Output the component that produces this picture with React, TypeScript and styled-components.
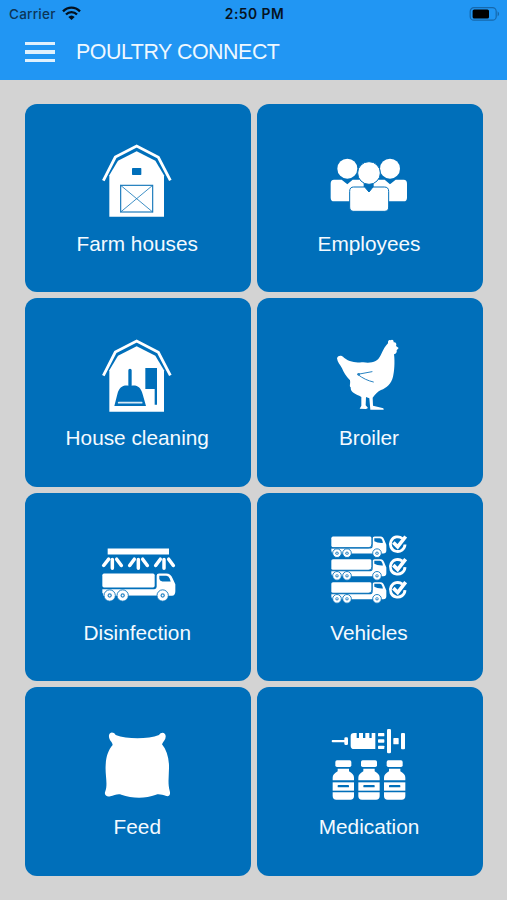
import React from "react";
import styled, { createGlobalStyle } from "styled-components";

const GlobalStyle = createGlobalStyle`
  * { box-sizing: border-box; }
  body { margin: 0; background: #d3d3d3; font-family: "Liberation Sans", Arial, sans-serif; }
`;

const BLUE = "#006fba";

const Screen = styled.div`
  width: 507px;
  height: 900px;
  overflow: hidden;
  background: #d3d3d3;
`;

const Header = styled.header`
  height: 79.5px;
  background: #2196f3;
`;

const StatusBar = styled.div`
  display: grid;
  grid-template-columns: 1fr auto 1fr;
  align-items: center;
  height: 27px;
  padding: 0 7px 0 9px;
  color: #06131f;
  font-family: Inter, sans-serif;
  font-size: 13.5px;
`;

const Carrier = styled.div`
  display: flex;
  align-items: center;
  gap: 6px;
  color: #0c3557;
  font-weight: 500;
  letter-spacing: 0.25px;
`;

const Clock = styled.div`
  font-weight: 600;
  font-size: 13.8px;
  letter-spacing: 0.5px;
`;

const BatterySlot = styled.div`
  display: flex;
  justify-content: flex-end;
`;

const TitleBar = styled.div`
  display: flex;
  align-items: center;
  height: 50px;
  padding-left: 25px;
  gap: 21px;
`;

const MenuButton = styled.button`
  display: flex;
  flex-direction: column;
  gap: 5px;
  width: 30px;
  padding: 0;
  border: 0;
  background: none;
`;

const MenuLine = styled.span`
  height: 3.4px;
  background: #e0f1fd;
`;

const Title = styled.h1`
  margin: 0;
  padding-top: 1px;
  color: #eef8ff;
  font-size: 21.4px;
  font-weight: 400;
  letter-spacing: -0.46px;
  white-space: nowrap;
`;

const Grid = styled.main`
  display: grid;
  grid-template-columns: 226px 225.5px;
  grid-auto-rows: 188.5px;
  gap: 6px;
  padding: 24px 0 0 25px;
`;

const Tile = styled.div`
  display: flex;
  flex-direction: column;
  align-items: center;
  padding-top: 27px;
  border-radius: 12px;
  background: ${BLUE};
`;

const TileIcon = styled.svg`
  display: block;
  flex: none;
  width: 100px;
  height: 100px;
`;

const Label = styled.span`
  margin-top: 1px;
  padding-right: 1.5px;
  color: #f4faff;
  font-size: 20.8px;
  line-height: 24px;
  white-space: nowrap;
`;

const Wifi = () => (
  <svg width="19" height="15" viewBox="0 0 57 45" fill="none" stroke="#04111d" strokeWidth="7">
    <path d="M3 16C18 1 39 1 54 16" />
    <path d="M12 25.500C21 16 36 16 45 25.500" />
    <path d="M19 33C25 27 32 27 38 33L28.500 42Z" fill="#04111d" stroke="none" />
  </svg>
);

const Battery = () => (
  <svg width="32" height="16" viewBox="0 0 32 16">
    <rect x="2.200" y="1.600" width="26" height="12.600" rx="3.800" fill="none" stroke="#1668ac" strokeWidth="1.200" />
    <rect x="4.600" y="3.500" width="16.400" height="9" rx="1.600" fill="#000" />
    <path d="M29.600 5.200q3 2.700 0 5.400z" fill="#1668ac" />
  </svg>
);

const BarnShell = () => (
  <>
    <path d="M40 151L76 80L140 47L205 81L241 150" fill="none" stroke="#fff" strokeWidth="8.500" />
    <path d="M58 259V135L84 91L140 63L196 91L222 135V259Z" fill="#fff" />
  </>
);

const FarmHouse = () => (
  <>
    <BarnShell />
    <rect x="126" y="113" width="28" height="21" rx="2" fill={BLUE} />
    <g fill="none" stroke="#1879bb" strokeWidth="3.500">
      <rect x="92" y="165" width="96" height="80" />
      <path d="M92 165L188 245M188 165L92 245" strokeWidth="2.500" />
    </g>
  </>
);

const Employees = () => (
  <g fill="#fff">
    <circle cx="82" cy="115" r="30" />
    <circle cx="210" cy="115" r="30" />
    <path d="M42 148H65L82 162L98 148H121Q131 148 131 160V213H42Q32 213 32 202V160Q32 148 42 148Z" />
    <path d="M171 148H194L210 162L227 148H251Q261 148 261 160V202Q261 213 251 213H161V160Q161 148 171 148Z" />
    <path d="M101 170H134L147 185L159 170H193Q206 170 206 183V230Q206 243 193 243H101Q89 243 89 230V183Q89 170 101 170Z" stroke={BLUE} strokeWidth="3" />
    <circle cx="147" cy="128" r="34" stroke={BLUE} strokeWidth="3" />
  </g>
);

const HouseCleaning = () => (
  <>
    <BarnShell />
    <g fill={BLUE}>
      <path d="M115 181V135Q115 130 120 130Q125 130 125 135V181C143 179 152 186 158 207L168 242H73L82 207C88 186 97 179 115 181Z" />
      <path d="M166 128H201V238H194V191H166Z" />
    </g>
    <path d="M86 232H155" stroke="#d7e9f5" strokeWidth="5" strokeLinecap="round" />
  </>
);

const Broiler = () => (
  <>
    <path
      d="M51 100C55 90 65 91 72 98C90 112 110 113 130 112C155 115 173 111 182 91C190 73 197 62 204 55C203 47 207 43 212 46C217 41 222 47 221 52C228 51 231 58 228 63L236 69L230 76C232 83 225 89 222 87C225 111 223 139 219 155C214 176 200 188 183 195C174 199 164 209 158 218L159 242L184 248Q192 248 191 254H151L148 220L138 216L137 241L144 249L138 252L119 251L124 242V216C108 207 91 204 92 187C87 183 92 178 90 166C78 154 71 142 66 130C61 120 52 111 51 100Z"
      fill="#fff"
    />
    <path d="M156 140L113 148C128 160 143 167 160 171" fill="none" stroke="#2883c2" strokeWidth="3" strokeLinecap="round" strokeLinejoin="round" />
    <circle cx="116" cy="148" r="4" fill="#2883c2" />
  </>
);

const Wheel = ({ cx, cy, r }: { cx: number; cy: number; r: number }) => (
  <>
    <circle cx={cx} cy={cy} r={r} fill="#fff" stroke={BLUE} strokeWidth="2.600" />
    <circle cx={cx} cy={cy} r={r * 0.38} fill="#2c86c4" />
    <circle cx={cx} cy={cy} r={r * 0.17} fill="#fff" />
  </>
);

const Disinfection = () => (
  <>
    <rect x="53" y="54" width="184" height="18" fill="#fff" />
    <path
      d="M56 86L41 105M67 87V113M80 86L94 105M133 86L119 105M145 87V113M158 86L172 105M211 86L197 105M222 87V113M236 86L250 105"
      fill="none"
      stroke="#fff"
      strokeWidth="10.500"
      strokeLinecap="round"
    />
    <rect x="37" y="129" width="157" height="42" rx="5" fill="#fff" />
    <path d="M37 176H193Q200 176 200 169V135Q200 129 207 129H229Q242 129 248 144L256 161V182Q256 194 246 196H37Z" fill="#fff" />
    <path d="M208 136H229Q236 136 239 144L242 153H217Q208 151 208 145Z" fill={BLUE} />
    <path d="M37 188V200M114 198H200" stroke={BLUE} strokeWidth="5" />
    <Wheel cx={59} cy={195} r={17} />
    <Wheel cx={98} cy={195} r={17} />
    <Wheel cx={218} cy={195} r={17} />
  </>
);

const VehicleRow = ({ y }: { y: number }) => (
  <g transform={`translate(0 ${y})`}>
    <rect x="34" y="48" width="121" height="32" rx="5" fill="#fff" />
    <path d="M34 84H151Q158 84 158 76V53Q158 48 164 48H182Q190 48 194 61L199 73V90Q199 99 190 99H40Q34 98 34 91Z" fill="#fff" />
    <path d="M34 82H145Q156 82 156 70V48" fill="none" stroke="#1578bb" strokeWidth="3" />
    <path d="M163 53H179Q185 53 187 60L189 67Q172 68 163 62Z" fill={BLUE} />
    <Wheel cx={51} cy={98} r={13} />
    <Wheel cx={81} cy={98} r={13} />
    <Wheel cx={171} cy={98} r={13} />
    <path d="M247 54A22 22 0 1 0 255 72" fill="none" stroke="#fff" strokeWidth="8.500" />
    <path d="M220 66L233 79L257 48" fill="none" stroke="#fff" strokeWidth="11" />
  </g>
);

const Vehicles = () => (
  <>
    <VehicleRow y={0} />
    <VehicleRow y={68} />
    <VehicleRow y={137} />
  </>
);

const Feed = () => (
  <path
    d="M57 61C59 51 70 49 77 60C111 73 174 73 207 60C214 48 227 53 227 63C228 74 220 79 216 88C229 104 236 125 237 151C238 176 232 201 239 227C243 240 236 245 229 243C217 240 208 236 198 239C164 252 126 250 94 239C84 235 72 241 61 244C50 247 41 240 46 229C54 207 45 178 47 151C48 124 55 105 68 90C67 80 55 75 57 61Z"
    fill="#fff"
  />
);

const Vial = ({ x }: { x: number }) => (
  <g transform={`translate(${x} 0)`} fill="#fff">
    <rect x="46" y="136" width="48" height="20" rx="5" />
    <path d="M53 161H87V169Q102 177 102 188V196H38V188Q38 177 53 169Z" />
    <path d="M38 202H102V227H38Z" />
    <path d="M38 232H102V243Q102 254 91 254H49Q38 254 38 243Z" />
    <rect x="53" y="210" width="34" height="7" rx="2" fill={BLUE} />
  </g>
);

const Medication = () => (
  <>
    <g fill="#fff">
      <rect x="35" y="75" width="43" height="7" rx="3" />
      <rect x="73" y="67" width="11" height="23" rx="4" />
      <path d="M102 54H110V69H117V54H129V69H136V54H148V69H155V54H166V102H102Q92 102 92 92V64Q92 54 102 54Z" />
      <rect x="174" y="54" width="19" height="10" rx="2" />
      <rect x="174" y="73" width="19" height="10" rx="2" />
      <rect x="174" y="92" width="19" height="10" rx="2" />
      <rect x="201" y="42" width="12" height="73" rx="4" />
      <rect x="220" y="69" width="16" height="19" rx="2" />
      <rect x="243" y="54" width="12" height="49" rx="3" />
    </g>
    <Vial x={0} />
    <Vial x={77} />
    <Vial x={154} />
  </>
);

const modules = [
  { label: "Farm houses", viewBox: "-6 2 300 300", Icon: FarmHouse },
  { label: "Employees", viewBox: "0 2 300 300", Icon: Employees },
  { label: "House cleaning", viewBox: "-6 -1 300 300", Icon: HouseCleaning },
  { label: "Broiler", viewBox: "0 0 300 300", Icon: Broiler },
  { label: "Disinfection", viewBox: "-6 -31.5 300 300", Icon: Disinfection },
  { label: "Vehicles", viewBox: "0 -1.5 300 300", Icon: Vehicles },
  { label: "Feed", viewBox: "-6 -3 300 300", Icon: Feed },
  { label: "Medication", viewBox: "0 -3 300 300", Icon: Medication },
];

export default function App() {
  return (
    <Screen>
      <GlobalStyle />
      <Header>
        <StatusBar>
          <Carrier>
            Carrier
            <Wifi />
          </Carrier>
          <Clock>2:50 PM</Clock>
          <BatterySlot>
            <Battery />
          </BatterySlot>
        </StatusBar>
        <TitleBar>
          <MenuButton aria-label="Menu">
            <MenuLine />
            <MenuLine />
            <MenuLine />
          </MenuButton>
          <Title>POULTRY CONNECT</Title>
        </TitleBar>
      </Header>
      <Grid>
        {modules.map(({ label, viewBox, Icon }) => (
          <Tile key={label}>
            <TileIcon viewBox={viewBox}>
              <Icon />
            </TileIcon>
            <Label>{label}</Label>
          </Tile>
        ))}
      </Grid>
    </Screen>
  );
}
